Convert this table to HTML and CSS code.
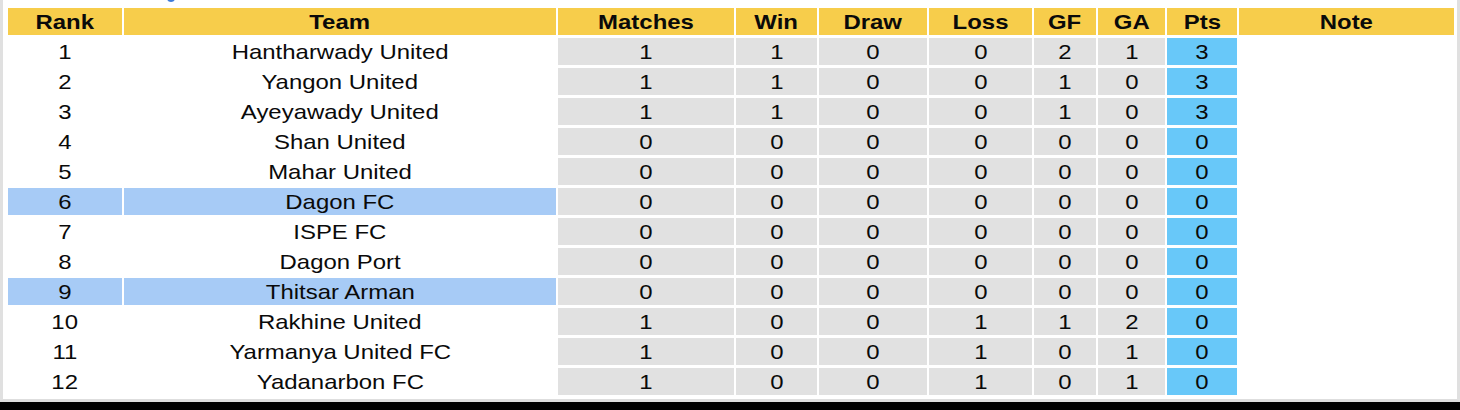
FILE: index.html
```html
<!DOCTYPE html>
<html>
<head>
<meta charset="utf-8">
<link rel="stylesheet" href="styles.css">
</head>
<body>
<div class="frame">
  <span class="dot"></span>
  <div class="standings">
    <div class="hd"><span>Rank</span></div><div class="hd"><span>Team</span></div><div class="hd"><span>Matches</span></div><div class="hd"><span>Win</span></div><div class="hd"><span>Draw</span></div><div class="hd"><span>Loss</span></div><div class="hd"><span>GF</span></div><div class="hd"><span>GA</span></div><div class="hd"><span>Pts</span></div><div class="hd"><span>Note</span></div>

    <div><span>1</span></div><div><span>Hantharwady United</span></div><div class="g"><span>1</span></div><div class="g"><span>1</span></div><div class="g"><span>0</span></div><div class="g"><span>0</span></div><div class="g"><span>2</span></div><div class="g"><span>1</span></div><div class="p"><span>3</span></div><div></div>
    <div><span>2</span></div><div><span>Yangon United</span></div><div class="g"><span>1</span></div><div class="g"><span>1</span></div><div class="g"><span>0</span></div><div class="g"><span>0</span></div><div class="g"><span>1</span></div><div class="g"><span>0</span></div><div class="p"><span>3</span></div><div></div>
    <div><span>3</span></div><div><span>Ayeyawady United</span></div><div class="g"><span>1</span></div><div class="g"><span>1</span></div><div class="g"><span>0</span></div><div class="g"><span>0</span></div><div class="g"><span>1</span></div><div class="g"><span>0</span></div><div class="p"><span>3</span></div><div></div>
    <div><span>4</span></div><div><span>Shan United</span></div><div class="g"><span>0</span></div><div class="g"><span>0</span></div><div class="g"><span>0</span></div><div class="g"><span>0</span></div><div class="g"><span>0</span></div><div class="g"><span>0</span></div><div class="p"><span>0</span></div><div></div>
    <div><span>5</span></div><div><span>Mahar United</span></div><div class="g"><span>0</span></div><div class="g"><span>0</span></div><div class="g"><span>0</span></div><div class="g"><span>0</span></div><div class="g"><span>0</span></div><div class="g"><span>0</span></div><div class="p"><span>0</span></div><div></div>
    <div class="h"><span>6</span></div><div class="h"><span>Dagon FC</span></div><div class="g"><span>0</span></div><div class="g"><span>0</span></div><div class="g"><span>0</span></div><div class="g"><span>0</span></div><div class="g"><span>0</span></div><div class="g"><span>0</span></div><div class="p"><span>0</span></div><div></div>
    <div><span>7</span></div><div><span>ISPE FC</span></div><div class="g"><span>0</span></div><div class="g"><span>0</span></div><div class="g"><span>0</span></div><div class="g"><span>0</span></div><div class="g"><span>0</span></div><div class="g"><span>0</span></div><div class="p"><span>0</span></div><div></div>
    <div><span>8</span></div><div><span>Dagon Port</span></div><div class="g"><span>0</span></div><div class="g"><span>0</span></div><div class="g"><span>0</span></div><div class="g"><span>0</span></div><div class="g"><span>0</span></div><div class="g"><span>0</span></div><div class="p"><span>0</span></div><div></div>
    <div class="h"><span>9</span></div><div class="h"><span>Thitsar Arman</span></div><div class="g"><span>0</span></div><div class="g"><span>0</span></div><div class="g"><span>0</span></div><div class="g"><span>0</span></div><div class="g"><span>0</span></div><div class="g"><span>0</span></div><div class="p"><span>0</span></div><div></div>
    <div><span>10</span></div><div><span>Rakhine United</span></div><div class="g"><span>1</span></div><div class="g"><span>0</span></div><div class="g"><span>0</span></div><div class="g"><span>1</span></div><div class="g"><span>1</span></div><div class="g"><span>2</span></div><div class="p"><span>0</span></div><div></div>
    <div><span>11</span></div><div><span>Yarmanya United FC</span></div><div class="g"><span>1</span></div><div class="g"><span>0</span></div><div class="g"><span>0</span></div><div class="g"><span>1</span></div><div class="g"><span>0</span></div><div class="g"><span>1</span></div><div class="p"><span>0</span></div><div></div>
    <div><span>12</span></div><div><span>Yadanarbon FC</span></div><div class="g"><span>1</span></div><div class="g"><span>0</span></div><div class="g"><span>0</span></div><div class="g"><span>1</span></div><div class="g"><span>0</span></div><div class="g"><span>1</span></div><div class="p"><span>0</span></div><div></div>
  </div>
</div>
<div class="bar"></div>
</body>
</html>
```

FILE: styles.css
```css
html, body {
  margin: 0;
  padding: 0;
  background: #fff;
}
body {
  width: 1460px;
  height: 410px;
  overflow: hidden;
  font-family: "Liberation Sans", Arial, sans-serif;
  color: #0a0a0a;
}
.frame {
  position: relative;
  box-sizing: border-box;
  width: 1460px;
  height: 402px;
  border-left: 3px solid #e0e0e0;
  border-right: 3px solid #e0e0e0;
  border-bottom: 3px solid #dedede;
  padding: 8px 0 0 5px;
}
.dot {
  position: absolute;
  left: 164px;
  top: -6px;
  width: 8px;
  height: 8px;
  border-radius: 50%;
  background: #3d7bd9;
}
.standings {
  display: grid;
  grid-template-columns: 114px 432px 176px 81px 108px 103px 62px 67px 70px 215px;
  grid-auto-rows: 27px;
  column-gap: 2px;
  row-gap: 3px;
  font-size: 21px;
}
.standings > div {
  display: flex;
  align-items: center;
  justify-content: center;
  white-space: nowrap;
}
.standings span {
  display: inline-block;
  transform: scaleX(1.14);
}
.standings .hd {
  background: #f7cd4b;
  font-weight: bold;
}
.standings .g {
  background: #e1e1e1;
}
.standings .p {
  background: #68c8f9;
}
.standings .h {
  background: #a7cbf6;
}
.bar {
  height: 8px;
  background: #000;
}
```
